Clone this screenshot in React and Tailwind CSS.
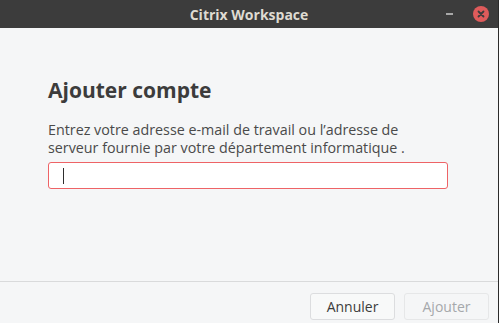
const App = () => {
  return (
    <div
      className="w-[499px] h-[323px] flex flex-col bg-[#f5f6f7] border-r border-[#2b2b2b] overflow-hidden"
      style={{ fontFamily: '"Open Sans", "Noto Sans", sans-serif' }}
    >
      <div className="h-[28px] shrink-0 bg-[#3c3c3c] flex items-center relative">
        <div className="flex-1 text-center text-[14px] font-bold text-[#dfdbd2]">Citrix Workspace</div>
        <div className="absolute right-[9px] top-0 h-[28px] flex items-center gap-[20px]">
          <div className="w-[7px] h-[2px] bg-[#a8a8a8]" />
          <div className="w-[16px] h-[16px] rounded-full bg-[#df5b5b] flex items-center justify-center">
            <svg width="8" height="8" viewBox="0 0 8 8">
              <path d="M1.5 1.5 L6.5 6.5 M6.5 1.5 L1.5 6.5" stroke="#3c3c3c" strokeWidth="1.8" strokeLinecap="round" />
            </svg>
          </div>
        </div>
      </div>

      <div className="flex-1 px-[48px] pt-[48px]">
        <h1 className="text-[21px] leading-[28px] font-bold text-[#3c3c3c]">Ajouter compte</h1>
        <p className="mt-[17px] text-[14.3px] leading-[18px] text-[#4a4a4a]">
          Entrez votre adresse e-mail de travail ou l’adresse de
          <br />
          serveur fournie par votre département informatique .
        </p>
        <div className="mt-[5px] w-[400px] h-[27px] bg-white border border-[#ee6366] rounded-[3px] flex items-center pl-[14px]">
          <div className="w-px h-[16px] bg-[#2e2e2e]" />
        </div>
      </div>

      <div className="h-[42px] shrink-0 border-t border-[#d9dadb] flex justify-end items-start pt-[11px] pr-[9px] gap-[9px]">
        <button className="w-[85px] h-[27px] rounded-[3px] border border-[#dcdddf] bg-[#f8f9f9] text-[14px] text-[#3c3c3c]">
          Annuler
        </button>
        <button className="w-[85px] h-[27px] rounded-[3px] border border-[#e6e7e8] bg-[#f5f6f7] text-[14px] text-[#a5a8ab]">
          Ajouter
        </button>
      </div>
    </div>
  );
};

export default App;
